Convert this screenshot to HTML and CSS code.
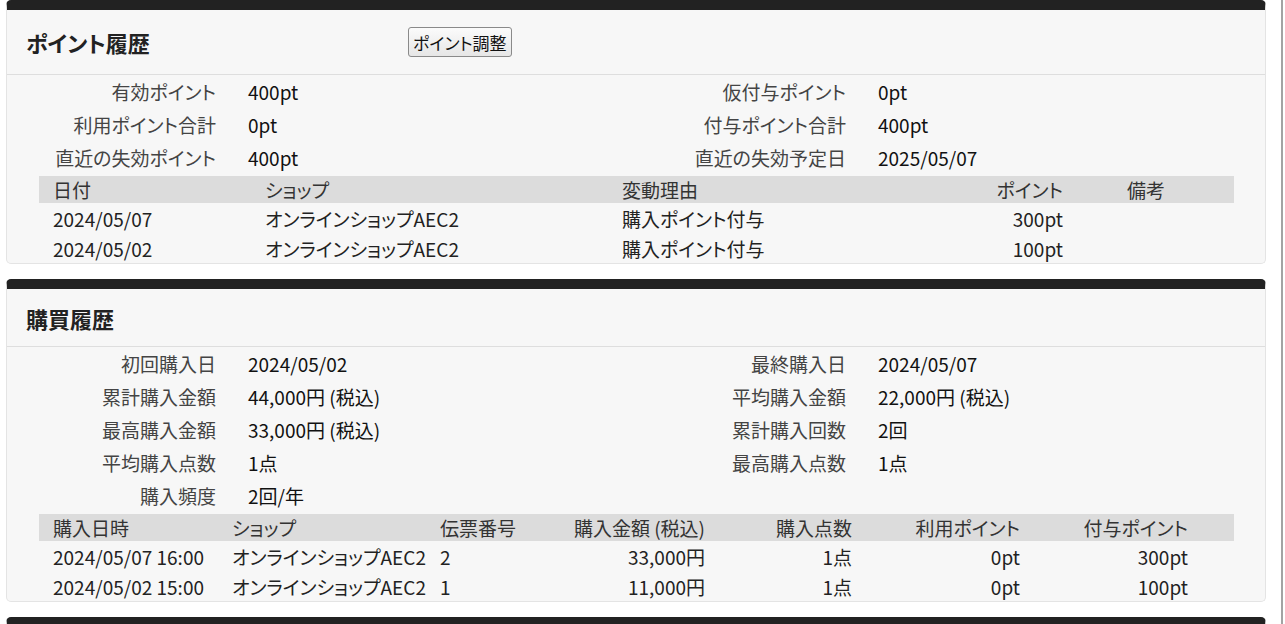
FILE: index.html
```html
<!DOCTYPE html>
<html lang="ja">
<head>
    <meta charset="UTF-8">
    <meta name="viewport" content="width=device-width, initial-scale=1.0">
    <title>顧客詳細</title>
    <link rel="stylesheet" href="styles.css">
</head>
<body>
    <div class="page">
        <!-- ポイント履歴 -->
        <section class="panel">
            <div class="panel-head panel-head-action">
                <h2>ポイント履歴</h2>
                <button type="button">ポイント調整</button>
            </div>
            <div class="summary">
                <dl class="summary-item"><dt>有効ポイント</dt><dd>400pt</dd></dl>
                <dl class="summary-item"><dt>仮付与ポイント</dt><dd>0pt</dd></dl>
                <dl class="summary-item"><dt>利用ポイント合計</dt><dd>0pt</dd></dl>
                <dl class="summary-item"><dt>付与ポイント合計</dt><dd>400pt</dd></dl>
                <dl class="summary-item"><dt>直近の失効ポイント</dt><dd>400pt</dd></dl>
                <dl class="summary-item"><dt>直近の失効予定日</dt><dd>2025/05/07</dd></dl>
            </div>
            <div class="list-wrap">
                <table class="list">
                    <colgroup>
                        <col style="width: 212px">
                        <col style="width: 357px">
                        <col style="width: 370px">
                        <col style="width: 99px">
                        <col>
                    </colgroup>
                    <thead>
                        <tr>
                            <th>日付</th>
                            <th>ショップ</th>
                            <th>変動理由</th>
                            <th class="num">ポイント</th>
                            <th class="note">備考</th>
                        </tr>
                    </thead>
                    <tbody>
                        <tr>
                            <td>2024/05/07</td>
                            <td>オンラインショップAEC2</td>
                            <td>購入ポイント付与</td>
                            <td class="num">300pt</td>
                            <td class="note"></td>
                        </tr>
                        <tr>
                            <td>2024/05/02</td>
                            <td>オンラインショップAEC2</td>
                            <td>購入ポイント付与</td>
                            <td class="num">100pt</td>
                            <td class="note"></td>
                        </tr>
                    </tbody>
                </table>
            </div>
        </section>

        <!-- 購買履歴 -->
        <section class="panel">
            <div class="panel-head">
                <h2>購買履歴</h2>
            </div>
            <div class="summary">
                <dl class="summary-item"><dt>初回購入日</dt><dd>2024/05/02</dd></dl>
                <dl class="summary-item"><dt>最終購入日</dt><dd>2024/05/07</dd></dl>
                <dl class="summary-item"><dt>累計購入金額</dt><dd>44,000円 (税込)</dd></dl>
                <dl class="summary-item"><dt>平均購入金額</dt><dd>22,000円 (税込)</dd></dl>
                <dl class="summary-item"><dt>最高購入金額</dt><dd>33,000円 (税込)</dd></dl>
                <dl class="summary-item"><dt>累計購入回数</dt><dd>2回</dd></dl>
                <dl class="summary-item"><dt>平均購入点数</dt><dd>1点</dd></dl>
                <dl class="summary-item"><dt>最高購入点数</dt><dd>1点</dd></dl>
                <dl class="summary-item"><dt>購入頻度</dt><dd>2回/年</dd></dl>
            </div>
            <div class="list-wrap">
                <table class="list">
                    <colgroup>
                        <col style="width: 179px">
                        <col style="width: 208px">
                        <col style="width: 114px">
                        <col style="width: 179px">
                        <col style="width: 147px">
                        <col style="width: 168px">
                        <col>
                    </colgroup>
                    <thead>
                        <tr>
                            <th>購入日時</th>
                            <th>ショップ</th>
                            <th>伝票番号</th>
                            <th class="num">購入金額 (税込)</th>
                            <th class="num">購入点数</th>
                            <th class="num">利用ポイント</th>
                            <th class="num last">付与ポイント</th>
                        </tr>
                    </thead>
                    <tbody>
                        <tr>
                            <td>2024/05/07 16:00</td>
                            <td>オンラインショップAEC2</td>
                            <td>2</td>
                            <td class="num">33,000円</td>
                            <td class="num">1点</td>
                            <td class="num">0pt</td>
                            <td class="num last">300pt</td>
                        </tr>
                        <tr>
                            <td>2024/05/02 15:00</td>
                            <td>オンラインショップAEC2</td>
                            <td>1</td>
                            <td class="num">11,000円</td>
                            <td class="num">1点</td>
                            <td class="num">0pt</td>
                            <td class="num last">100pt</td>
                        </tr>
                    </tbody>
                </table>
            </div>
        </section>

        <!-- 次のパネル（見出しは画面外） -->
        <section class="panel panel-next"></section>
    </div>
</body>
</html>
```

FILE: styles.css
```css
html, body {
    margin: 0;
    padding: 0;
    background: #fff;
}
body {
    font-family: "Noto Sans CJK JP", "Noto Sans", sans-serif;
    font-feature-settings: "palt";
    font-size: 19px;
    color: #222;
    overflow: hidden;
}
.page {
    width: 1283px;
    min-height: 100vh;
    border-right: 2px solid #a3a3a3;
    padding: 0 15px 0 6px;
    box-sizing: border-box;
}
.panel {
    background: #f7f7f7;
    border: 1px solid #e4e4e4;
    border-top: 10px solid #222;
    border-radius: 5px;
    margin-bottom: 15px;
}
.panel-next {
    height: 58px;
}
.panel-head {
    display: flex;
    align-items: center;
    height: 57px;
    padding-left: 19px;
    border-bottom: 1px solid #dedede;
}
.panel-head-action {
    height: 64px;
}
.panel-head h2 {
    margin: 0;
    width: 382px;
    font-size: 22px;
    font-weight: bold;
    color: #222;
    line-height: 1;
}
.panel-head button {
    height: 30px;
    padding: 0 4px;
    font-family: inherit;
    font-feature-settings: "palt";
    font-size: 17px;
    color: #111;
    background: linear-gradient(#fbfbfb, #e6e6e6);
    border: 1px solid #8a8a8a;
    border-radius: 3px;
    cursor: pointer;
}
.summary {
    display: grid;
    grid-template-columns: 630px 1fr;
    grid-auto-rows: 33px;
    padding-bottom: 2px;
}
.summary-item {
    display: grid;
    grid-template-columns: 209px 1fr;
    column-gap: 32px;
    align-items: center;
    margin: 0;
}
.summary-item dt {
    text-align: right;
    color: #444;
}
.summary-item dd {
    margin: 0;
    color: #111;
}
.list-wrap {
    padding: 0 31px 0 32px;
}
.list {
    width: 100%;
    border-collapse: collapse;
    table-layout: fixed;
}
.list th {
    height: 26px;
    padding: 0 14px;
    background: #dcdcdc;
    font-weight: normal;
    text-align: left;
    color: #333;
    white-space: nowrap;
}
.list td {
    height: 30px;
    padding: 0 14px;
    white-space: nowrap;
}
.list .num {
    text-align: right;
}
.list .note {
    padding-left: 50px;
}
.list .last {
    padding-right: 46px;
}
```
